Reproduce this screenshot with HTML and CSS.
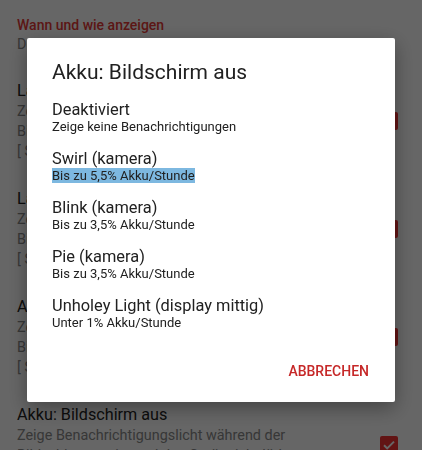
FILE: index.html
```html
<!DOCTYPE html>
<html lang="de">
<head>
<meta charset="utf-8">
<title>Akku: Bildschirm aus</title>
<link rel="stylesheet" href="styles.css">
</head>
<body>
<main class="prefs">
  <section class="group">
    <h2 class="group-title">Wann und wie anzeigen</h2>
    <p class="group-summary">Der Benachrichtigungsstil für jeden Zustand</p>
  </section>
  <ul class="pref-list">
    <li class="pref">
      <div class="pref-text">
        <div class="pref-title">Laden: Bildschirm an</div>
        <div class="pref-summary">Zeige Benachrichtigungslicht während der Bildschirm an ist und das Gerät lädt</div>
        <div class="pref-summary">[ Swirl (kamera) ]</div>
      </div>
      <span class="checkbox"><svg viewBox="0 0 18 18"><path d="M4 9.2l3.2 3.2L14 5.6"/></svg></span>
    </li>
    <li class="pref">
      <div class="pref-text">
        <div class="pref-title">Laden: Bildschirm aus</div>
        <div class="pref-summary">Zeige Benachrichtigungslicht während der Bildschirm aus ist und das Gerät lädt</div>
        <div class="pref-summary">[ Swirl (kamera) ]</div>
      </div>
      <span class="checkbox"><svg viewBox="0 0 18 18"><path d="M4 9.2l3.2 3.2L14 5.6"/></svg></span>
    </li>
    <li class="pref">
      <div class="pref-text">
        <div class="pref-title">Akku: Bildschirm an</div>
        <div class="pref-summary">Zeige Benachrichtigungslicht während der Bildschirm an ist und das Gerät nicht lädt</div>
        <div class="pref-summary">[ Swirl (kamera) ]</div>
      </div>
      <span class="checkbox"><svg viewBox="0 0 18 18"><path d="M4 9.2l3.2 3.2L14 5.6"/></svg></span>
    </li>
    <li class="pref">
      <div class="pref-text">
        <div class="pref-title">Akku: Bildschirm aus</div>
        <div class="pref-summary">Zeige Benachrichtigungslicht während der Bildschirm aus ist und das Gerät nicht lädt</div>
        <div class="pref-summary">[ Swirl (kamera) ]</div>
      </div>
      <span class="checkbox"><svg viewBox="0 0 18 18"><path d="M4 9.2l3.2 3.2L14 5.6"/></svg></span>
    </li>
  </ul>
</main>

<div class="scrim">
  <div class="dialog" role="dialog">
    <h1 class="dialog-title">Akku: Bildschirm aus</h1>
    <ul class="options">
      <li class="option">
        <div class="option-title">Deaktiviert</div>
        <div class="option-sub">Zeige keine Benachrichtigungen</div>
      </li>
      <li class="option">
        <div class="option-title">Swirl (kamera)</div>
        <div class="option-sub"><span class="selected">Bis zu 5,5% Akku/Stunde</span></div>
      </li>
      <li class="option">
        <div class="option-title">Blink (kamera)</div>
        <div class="option-sub">Bis zu 3,5% Akku/Stunde</div>
      </li>
      <li class="option">
        <div class="option-title">Pie (kamera)</div>
        <div class="option-sub">Bis zu 3,5% Akku/Stunde</div>
      </li>
      <li class="option">
        <div class="option-title">Unholey Light (display mittig)</div>
        <div class="option-sub">Unter 1% Akku/Stunde</div>
      </li>
    </ul>
    <div class="actions">
      <button class="btn" type="button">ABBRECHEN</button>
    </div>
  </div>
</div>
</body>
</html>
```

FILE: styles.css
```css
* { box-sizing: border-box; }

html, body {
  margin: 0;
  padding: 0;
  background: #ffffff;
  font-family: Roboto, "Noto Sans", "Liberation Sans", sans-serif;
  overflow: hidden;
  height: 450px;
}

/* background preference screen */
.prefs {
  padding: 0 0 0 17px;
}

.group {
  padding-top: 15px;
}

.group-title {
  margin: 0;
  font-size: 14px;
  line-height: 20px;
  font-weight: 500;
  color: #e53935;
}

.group-summary {
  margin: 0;
  font-size: 14.4px;
  line-height: 20px;
  color: #8a8a8a;
}

.pref-list {
  list-style: none;
  margin: 12px 0 0;
  padding: 0;
}

.pref {
  display: flex;
  align-items: center;
  gap: 24px;
  padding: 13px 24px 13px 0;
}

.pref-text {
  flex: 1;
  min-width: 0;
}

.pref-title {
  font-size: 16.2px;
  line-height: 22px;
  color: #222222;
}

.pref-summary {
  font-size: 14.4px;
  line-height: 20px;
  color: #8a8a8a;
}

.checkbox {
  flex: none;
  width: 18px;
  height: 18px;
  border-radius: 2px;
  background: #f53333;
  display: flex;
}

.checkbox svg {
  width: 18px;
  height: 18px;
  fill: none;
  stroke: #ffffff;
  stroke-width: 2;
}

/* dimmed scrim + dialog */
.scrim {
  position: fixed;
  inset: 0;
  background: rgba(0, 0, 0, 0.6);
  display: flex;
  justify-content: center;
  align-items: flex-start;
  padding-top: 38px;
}

.dialog {
  width: 368px;
  background: #ffffff;
  border-radius: 2px;
  box-shadow: 0 6px 20px rgba(0, 0, 0, 0.35);
  padding: 20px 26px 21px 25px;
}

.dialog-title {
  margin: 0;
  font-size: 21px;
  line-height: 28px;
  font-weight: 400;
  color: #212121;
}

.options {
  list-style: none;
  margin: 14px 0 0;
  padding: 0;
  display: flex;
  flex-direction: column;
  gap: 15px;
}

.option-title {
  font-size: 16.4px;
  line-height: 19px;
  color: #212121;
}

.option-sub {
  font-size: 13px;
  line-height: 15px;
  color: #212121;
}

.selected {
  background: #7db8e0;
}

.actions {
  display: flex;
  justify-content: flex-end;
  margin-top: 31px;
}

.btn {
  border: 0;
  background: none;
  padding: 0;
  font-family: inherit;
  font-size: 14px;
  line-height: 20px;
  font-weight: 500;
  color: #c62828;
}
```
